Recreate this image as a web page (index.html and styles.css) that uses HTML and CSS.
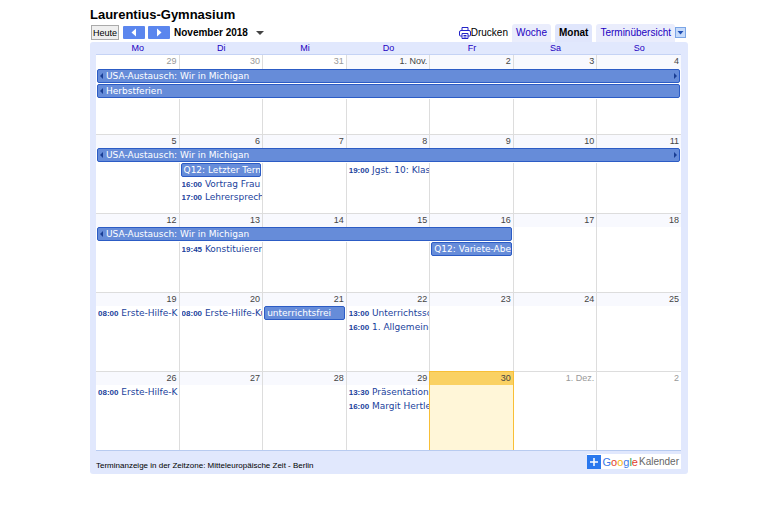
FILE: index.html
```html
<!DOCTYPE html>
<html lang="de">
<head>
<meta charset="utf-8">
<title>Laurentius-Gymnasium</title>
<link rel="stylesheet" href="styles.css">
</head>
<body>
<main class="calendar">
  <h1>Laurentius-Gymnasium</h1>
  <div class="toolbar">
    <button class="today-button" type="button">Heute</button>
    <button class="step" type="button" aria-label="Zurück"><svg width="22" height="13" viewBox="0 0 22 13"><path d="M13 2.500v8L8.500 6.500z" fill="#fff"/></svg></button>
    <button class="step" type="button" aria-label="Weiter"><svg width="22" height="13" viewBox="0 0 22 13"><path d="M9 2.500v8l4.500-4z" fill="#fff"/></svg></button>
    <button class="period" type="button">November 2018 <svg width="8" height="4" viewBox="0 0 8 4"><path d="M0 0h8L4 4z" fill="#444"/></svg></button>
    <nav class="views">
      <a class="print" href="#"><svg width="12" height="12" viewBox="0 0 12 12" fill="none" stroke="#2323c8"><path d="M3 3.500v-3h6v3M3 9H1.500Q.5 9 .5 8V5Q.5 3.500 2 3.500h8q1.500 0 1.500 1.500v3q0 1-1 1H9M3 6.500h6v5H3zM4.500 8.500h3M4.500 10h3"/></svg>Drucken</a>
      <a class="tab" href="#">Woche</a>
      <a class="tab active" href="#">Monat</a>
      <a class="tab agenda" href="#">Terminübersicht</a>
      <button class="more" type="button" aria-label="Kalender auswählen"><svg width="9" height="9" viewBox="0 0 9 9"><path d="M1.500 3h6l-3 3.500z" fill="#1f4fb4"/></svg></button>
    </nav>
  </div>
  <div class="frame">
    <table class="month">
      <thead>
        <tr><th>Mo</th><th>Di</th><th>Mi</th><th>Do</th><th>Fr</th><th>Sa</th><th>So</th></tr>
      </thead>
      <tbody>
        <tr class="dates"><td class="other">29</td><td class="other">30</td><td class="other">31</td><td>1. Nov.</td><td>2</td><td>3</td><td>4</td></tr>
        <tr class="bars"><td colspan="7"><a class="bar from to" href="#">USA-Austausch: Wir in Michigan</a></td></tr>
        <tr class="bars"><td colspan="7"><a class="bar from" href="#">Herbstferien</a></td></tr>
        <tr class="rest-two-bars"><td></td><td></td><td></td><td></td><td></td><td></td><td></td></tr>
      </tbody>
      <tbody>
        <tr class="dates"><td>5</td><td>6</td><td>7</td><td>8</td><td>9</td><td>10</td><td>11</td></tr>
        <tr class="bars"><td colspan="7"><a class="bar from to" href="#">USA-Austausch: Wir in Michigan</a></td></tr>
        <tr class="bars"><td></td><td><a class="bar" href="#">Q12: Letzter Term</a></td><td></td><td><a class="event" href="#"><time>19:00</time> Jgst. 10: Klas</a></td><td></td><td></td><td></td></tr>
        <tr class="lines"><td></td><td><a class="event" href="#"><time>16:00</time> Vortrag Frau</a></td><td></td><td></td><td></td><td></td><td></td></tr>
        <tr class="lines"><td></td><td><a class="event" href="#"><time>17:00</time> Lehrersprech</a></td><td></td><td></td><td></td><td></td><td></td></tr>
        <tr class="rest-full"><td></td><td></td><td></td><td></td><td></td><td></td><td></td></tr>
      </tbody>
      <tbody>
        <tr class="dates"><td>12</td><td>13</td><td>14</td><td>15</td><td>16</td><td>17</td><td>18</td></tr>
        <tr class="bars"><td colspan="5"><a class="bar from" href="#">USA-Austausch: Wir in Michigan</a></td><td></td><td></td></tr>
        <tr class="bars"><td></td><td><a class="event" href="#"><time>19:45</time> Konstituieren</a></td><td></td><td></td><td><a class="bar" href="#">Q12: Variete-Abe</a></td><td></td><td></td></tr>
        <tr class="rest-two-bars"><td></td><td></td><td></td><td></td><td></td><td></td><td></td></tr>
      </tbody>
      <tbody>
        <tr class="dates"><td>19</td><td>20</td><td>21</td><td>22</td><td>23</td><td>24</td><td>25</td></tr>
        <tr class="bars"><td><a class="event" href="#"><time>08:00</time> Erste-Hilfe-K</a></td><td><a class="event" href="#"><time>08:00</time> Erste-Hilfe-Ku</a></td><td><a class="bar" href="#">unterrichtsfrei</a></td><td><a class="event" href="#"><time>13:00</time> Unterrichtssc</a></td><td></td><td></td><td></td></tr>
        <tr class="lines"><td></td><td></td><td></td><td><a class="event" href="#"><time>16:00</time> 1. Allgemeine</a></td><td></td><td></td><td></td></tr>
        <tr class="rest-bar-line"><td></td><td></td><td></td><td></td><td></td><td></td><td></td></tr>
      </tbody>
      <tbody>
        <tr class="dates"><td>26</td><td>27</td><td>28</td><td>29</td><td class="now">30</td><td class="other">1. Dez.</td><td class="other">2</td></tr>
        <tr class="bars"><td><a class="event" href="#"><time>08:00</time> Erste-Hilfe-K</a></td><td></td><td></td><td><a class="event" href="#"><time>13:30</time> Präsentation</a></td><td class="now"></td><td></td><td></td></tr>
        <tr class="lines"><td></td><td></td><td></td><td><a class="event" href="#"><time>16:00</time> Margit Hertle</a></td><td class="now"></td><td></td><td></td></tr>
        <tr class="rest-bar-line"><td></td><td></td><td></td><td></td><td class="now"></td><td></td><td></td></tr>
      </tbody>
    </table>
    <footer>
      <span class="zone">Terminanzeige in der Zeitzone: Mitteleuropäische Zeit - Berlin</span>
      <a class="google" href="#"><svg width="14" height="14" viewBox="0 0 14 14"><path d="M0 0h14v14H0z" fill="#2a78ee"/><path d="M7 3v8M3 7h8" stroke="#fff" stroke-width="1.500"/></svg><span class="logo"><span class="blue">G</span><span class="red">o</span><span class="yellow">o</span><span class="blue">g</span><span class="green">l</span><span class="red">e</span></span><span class="product">Kalender</span></a>
    </footer>
  </div>
</main>
</body>
</html>
```
FILE: styles.css
```css
* { box-sizing: border-box; }
body {
  margin: 0;
  background: #fff;
  color: #000;
  font-family: "Liberation Sans", Arial, sans-serif;
  font-size: 9px;
}
a { color: inherit; text-decoration: none; }
button { font: inherit; color: inherit; padding: 0; border: 0; background: none; }
svg { display: block; }

.calendar { margin: 8px 80px 0 90px; }
h1 { margin: 0; font-size: 13px; line-height: 14px; }

.toolbar { display: flex; align-items: flex-end; height: 20px; }
.today-button {
  width: 28px;
  height: 15px;
  margin: 0 4px 2px 1px;
  border: 1px solid #aaa;
  background: #efefef;
}
.step { margin: 0 3px 3px 0; background: #5b86ee; border-radius: 1px; }
.period {
  display: flex;
  align-items: center;
  gap: 8px;
  height: 19px;
  margin-left: 1px;
  font-size: 10px;
  font-weight: bold;
}
.views { display: flex; align-items: flex-end; gap: 4px; margin-left: auto; font-size: 10px; }
.print { display: flex; align-items: center; height: 19px; }
.tab {
  height: 18px;
  padding: 0 4px;
  line-height: 18px;
  color: #2200c1;
  background: #eaedfc;
  border-radius: 3px 3px 0 0;
}
.tab.active { color: #000; background: #e0e6fc; font-weight: bold; }
.more { margin: 0 2px 4px 0; border: 1px solid #7aa5e6; background: #c5dafa; }
.views .agenda { margin-right: -4px; }

.frame { padding: 0 7px 0 6px; background: #e1e8fd; border-radius: 3px; }
.month {
  width: 100%;
  table-layout: fixed;
  border-collapse: separate;
  border-spacing: 0;
  background: #fff;
  border-bottom: 1px solid #b8cbf0;
}
th {
  height: 13px;
  padding: 0;
  background: #e1e8fd;
  border-bottom: 1px solid #c5d3f5;
  color: #2200c1;
  line-height: 12px;
  font-weight: normal;
}
td { padding: 0; border-right: 1px solid #ddd; vertical-align: top; }
td:last-child { border-right: 0; }
.dates td {
  height: 14px;
  padding-right: 2px;
  border-top: 1px solid #ddd;
  background: #f8f9fe;
  color: #444;
  line-height: 13px;
  text-align: right;
}
tbody:nth-child(2) .dates td { border-top: 0; }
.dates .other { color: #999; background: #fff; }
.bars td { height: 15px; }
.lines td { height: 13px; }
.rest-two-bars td { height: 35px; }
.rest-full td { height: 9px; }
.rest-bar-line td { height: 37px; }
.now { background: #fff6d8; border-right-color: #f8bf36; box-shadow: -1px 0 #f8bf36; }
.month .dates .now { background: #fad163; border-color: #f8bf36; }

.bar, .event {
  display: block;
  margin: 0 1px;
  overflow: hidden;
  white-space: nowrap;
  font-family: "DejaVu Sans", Verdana, sans-serif;
}
.bar {
  position: relative;
  height: 14px;
  padding-left: 2px;
  border: 1px solid #2c5cc5;
  border-radius: 2px;
  background: #668cd9;
  color: #fff;
  line-height: 12px;
}
.from { padding-left: 8px; }
.from::before, .to::after {
  content: "";
  position: absolute;
  top: 3px;
  border: 3px solid transparent;
}
.from::before { left: -1px; border-right-color: #1a3e94; }
.to::after { right: -1px; border-left-color: #1a3e94; }
.event { margin: 0 0 0 2px; color: #1b3f9c; line-height: 13px; }
.bars .event { line-height: 15px; }
.event time { font-family: "Liberation Sans", Arial, sans-serif; font-size: 8px; font-weight: bold; }

footer { display: flex; align-items: center; justify-content: space-between; height: 23px; padding-bottom: 2px; }
.zone { padding-top: 7px; font-size: 8px; }
.google { display: flex; align-items: center; height: 15px; padding-right: 2px; background: #fff; font-size: 11px; }
.logo { margin: 0 1px; }
.product { color: #666; font-size: 10px; }
.blue { color: #3a78e7; }
.red { color: #e23c2d; }
.yellow { color: #f5b50a; }
.green { color: #2fa04e; }
```
